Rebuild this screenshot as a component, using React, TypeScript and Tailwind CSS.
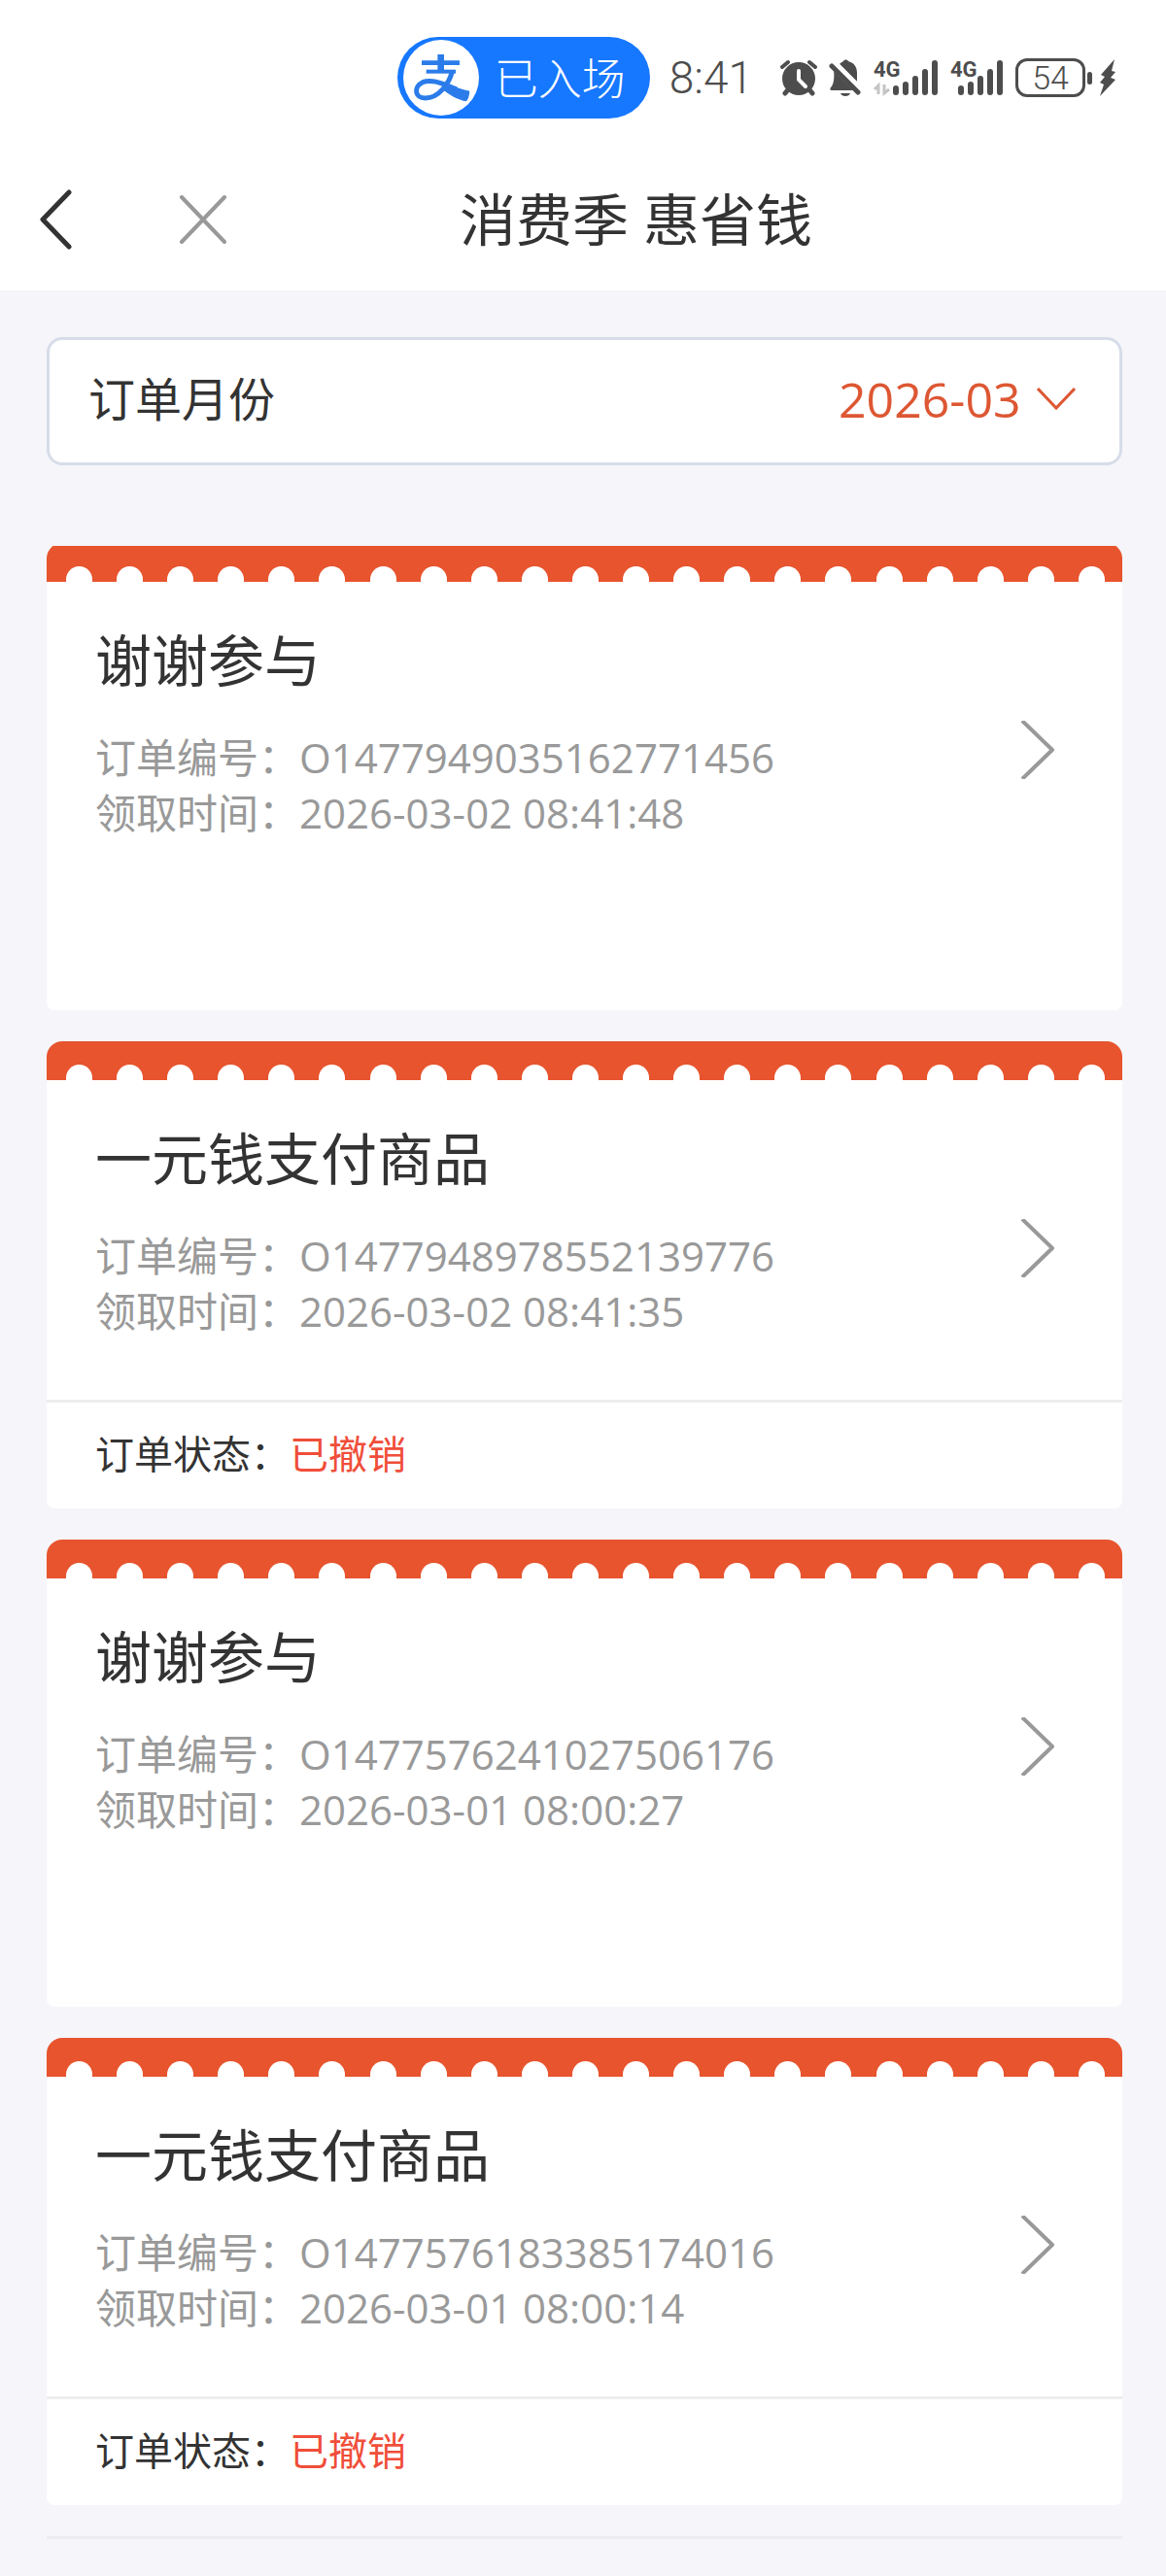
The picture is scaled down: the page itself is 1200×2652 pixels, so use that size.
import { useState } from "react";

interface Order {
  id: string;
  title: string;
  time: string;
  status?: string;
}

const months = ["2026-03", "2026-02", "2026-01"];

const orders: Order[] = [
  { id: "O1477949035162771456", title: "谢谢参与", time: "2026-03-02 08:41:48" },
  { id: "O1477948978552139776", title: "一元钱支付商品", time: "2026-03-02 08:41:35", status: "已撤销" },
  { id: "O1477576241027506176", title: "谢谢参与", time: "2026-03-01 08:00:27" },
  { id: "O1477576183385174016", title: "一元钱支付商品", time: "2026-03-01 08:00:14", status: "已撤销" },
];

function AlipayMark() {
  return (
    <svg viewBox="0 0 234 234" className="size-[78px]" fill="none" stroke="#2b7cea" aria-hidden="true">
      <circle cx="117" cy="117" r="117" fill="#fff" stroke="none" />
      <path d="M57 71H174" strokeWidth="14" />
      <path d="M116 45V98" strokeWidth="20" />
      <path d="M71 98H162" strokeWidth="12" />
      <path d="M151 98C142 134 110 180 68 180C34 180 32 144 60 131C90 119 126 138 164 152" strokeWidth="15" />
      <path d="M128 130C156 144 180 154 205 158Q204 178 195 190C168 186 142 170 118 150Z" fill="#2b7cea" stroke="none" />
    </svg>
  );
}

function AlarmIcon() {
  return (
    <svg viewBox="0 0 38 38" className="h-[38px] w-[38px]" fill="none" strokeLinecap="round" aria-hidden="true">
      <path d="M2 8L8 3M36 8L30 3" stroke="#4d4d4d" strokeWidth="4" />
      <path d="M9 30L5 35M29 30L33 35" stroke="#4d4d4d" strokeWidth="5" />
      <circle cx="19" cy="20" r="17" fill="#4d4d4d" />
      <path d="M19 12V21L26 28" stroke="#fff" strokeWidth="4" />
    </svg>
  );
}

function MutedIcon() {
  return (
    <svg viewBox="0 0 34 38" className="h-[38px] w-[34px]" fill="#4d4d4d" aria-hidden="true">
      <path d="M12 4C13 3 15 2 15 2C16 0 19 0 20 2C27 4 29 9 29 14V23L11 5Z" />
      <path d="M5 12L25 32H3C1 32 1 30 2 29C5 26 6 18 5 12Z" />
      <path d="M12 35H22C21 39 13 39 12 35Z" />
      <path d="M7 3L34 30" stroke="#fff" strokeWidth="3" />
      <path d="M3 7L30 34" stroke="#4d4d4d" strokeWidth="5" strokeLinecap="round" />
    </svg>
  );
}

function SignalIcon({ data }: { data?: boolean }) {
  return (
    <svg
      viewBox={data ? "0 0 67 38" : "12 0 55 38"}
      className={data ? "h-[38px] w-[67px] overflow-visible" : "h-[38px] w-[55px] overflow-visible"}
      role="img"
      aria-label="4G"
    >
      <path d="M23 30V34M33 26V34M43 20V34M53 13V34M63 4V34" stroke="#4d4d4d" strokeWidth="6" strokeLinecap="round" />
      <text x={data ? 0 : 12} y="18" fontFamily="Roboto, sans-serif" fontSize="22" fontWeight="700" fill="#4d4d4d">
        4G
      </text>
      {data && <path d="M1 31L5 27V36M11 26V35L16 31" fill="none" stroke="#c4c4c4" strokeWidth="3" />}
    </svg>
  );
}

function StatusBar() {
  return (
    <div className="flex items-center justify-end gap-5 pt-[38px] pr-[51px] pb-[30px] text-[#4d4d4d]">
      <div className="flex h-[84px] w-[260px] items-center gap-4 rounded-full bg-[#1677ff] pl-[6px] text-[45px] leading-none font-light text-white">
        <AlipayMark />
        <span>已入场</span>
      </div>
      <span className="mr-2 font-[Roboto,sans-serif] text-[46px] leading-none font-light">8:41</span>
      <div className="flex items-center gap-3">
        <AlarmIcon />
        <MutedIcon />
        <SignalIcon data />
        <SignalIcon />
        <div className="flex items-center gap-0.5">
          <span className="flex h-10 w-[72px] items-center justify-center rounded-xl border-3 border-[#4d4d4d] font-[Roboto,sans-serif] text-[34px] leading-none font-light">
            54
          </span>
          <span className="h-[13px] w-[5px] rounded-full bg-[#4d4d4d]" />
          <svg viewBox="0 0 18 40" className="ml-[5px] h-10 w-[18px]" fill="#4d4d4d" aria-hidden="true">
            <path d="M16 1L2 17L6 19L1 25L5 27L1 39L17 22L12 20L17 14L13 13Z" strokeLinejoin="round" />
          </svg>
        </div>
      </div>
    </div>
  );
}

function TitleBar() {
  return (
    <div className="flex h-[147px] items-center pl-[41px]">
      <button aria-label="返回">
        <svg viewBox="0 0 33 62" className="h-[62px] w-[33px]" fill="none" stroke="#333" strokeWidth="5" strokeLinecap="round" strokeLinejoin="round">
          <path d="M30 3L3 31L30 59" />
        </svg>
      </button>
      <button aria-label="关闭" className="ml-[110px]">
        <svg viewBox="0 0 50 50" className="size-[50px]" fill="none" stroke="#999" strokeWidth="4" strokeLinecap="round">
          <path d="M3 2L47 48M47 2L3 48" />
        </svg>
      </button>
      <h1 className="flex-1 pr-[125px] text-center text-[58px] leading-[80px]">消费季 惠省钱</h1>
    </div>
  );
}

function OrderCard({ order }: { order: Order }) {
  return (
    <li className="flex min-h-[481px] flex-col overflow-hidden rounded-t-2xl rounded-b-lg bg-white">
      <div className="flex h-10 items-end justify-between bg-[#e7542e] pr-[18px] pl-5">
        {Array.from({ length: 21 }, (_, i) => (
          <span key={i} className="h-4 w-[27px] rounded-t-full bg-white" />
        ))}
      </div>

      <a href="#" className="flex items-center justify-between pt-[41px] pr-[69px] pb-6 pl-[50px]">
        <div className="pb-[39px]">
          <h2 className="mb-[31px] text-[58px] leading-[80px]">{order.title}</h2>
          <p className="text-[42px] leading-[57px] text-[#999]">订单编号：{order.id}</p>
          <p className="text-[42px] leading-[57px] text-[#999]">领取时间：{order.time}</p>
        </div>
        <svg viewBox="0 0 36 60" className="h-[60px] w-9" fill="none" stroke="#999" strokeWidth="4" aria-hidden="true">
          <path d="M2 0L33 30L2 60" strokeLinejoin="round" />
        </svg>
      </a>

      {order.status && (
        <div className="flex flex-1 items-center border-t-3 border-[#eee] pb-1 pl-[50px] text-[40px] leading-[57px]">
          <span>订单状态：</span>
          <span className="text-[#f04e3a]">{order.status}</span>
        </div>
      )}
    </li>
  );
}

export default function App() {
  const [month, setMonth] = useState("2026-03");

  return (
    <div className="min-h-screen bg-[#f5f5fa] font-['Open_Sans','Noto_Sans_CJK_SC',sans-serif] text-[#333]" lang="zh-CN">
      <header className="bg-white">
        <StatusBar />
        <TitleBar />
      </header>

      <main className="pt-12 pr-[45px] pl-12">
        <div className="flex h-[132px] items-center justify-between rounded-2xl border-3 border-[#d6dde8] bg-white pr-[45px] pb-1 pl-10 text-[48px] leading-[64px]">
          <label htmlFor="month">订单月份</label>
          <div className="flex items-center gap-4 text-[#dd5733]">
            <select
              id="month"
              value={month}
              onChange={(e) => setMonth(e.target.value)}
              className="appearance-none bg-transparent text-[50px]"
            >
              {months.map((m) => (
                <option key={m}>{m}</option>
              ))}
            </select>
            <svg viewBox="0 0 40 24" className="h-6 w-10" fill="none" stroke="currentColor" strokeWidth="3" aria-hidden="true">
              <path d="M1 1L20 21L39 1" />
            </svg>
          </div>
        </div>

        {/* the list is scrolled a little, so its first card is cut at the top */}
        <div className="mt-[83px] overflow-hidden">
          <ul className="-mt-[3px] flex flex-col gap-8">
            {orders.map((order) => (
              <OrderCard key={order.id} order={order} />
            ))}
          </ul>
          <hr className="mt-8 border-t-3 border-[#ededf0]" />
        </div>
      </main>
    </div>
  );
}
